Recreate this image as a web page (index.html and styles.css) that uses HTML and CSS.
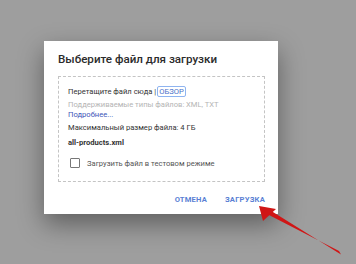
FILE: index.html
```html
<!DOCTYPE html>
<html lang="ru">
<head>
    <meta charset="UTF-8">
    <meta name="viewport" content="width=device-width, initial-scale=1.0">
    <title>Загрузка файла</title>
    <link rel="stylesheet" href="styles.css">
</head>
<body>
    <div class="dialog">
        <h2 class="dialog-title">Выберите файл для загрузки</h2>

        <div class="drop-box">
            <p class="drop-line">Перетащите файл сюда | <span class="browse">ОБЗОР</span></p>
            <p class="hint">Поддерживаемые типы файлов: XML, TXT</p>
            <a class="more" href="#">Подробнее...</a>
            <p class="max-size">Максимальный размер файла: 4 ГБ</p>
            <p class="file-name">all-products.xml</p>
            <label class="test-mode">
                <span class="checkbox"></span>
                Загрузить файл в тестовом режиме
            </label>
        </div>

        <div class="actions">
            <button class="btn">ОТМЕНА</button>
            <button class="btn">ЗАГРУЗКА</button>
        </div>
    </div>

    <svg class="arrow" width="356" height="264" viewBox="0 0 356 264">
        <polygon points="339,251 268,214.5 270.5,210.5 341,254.5" fill="#d01616"/>
        <polygon points="259,206 276,209 263,221" fill="#d01616"/>
    </svg>
</body>
</html>
```

FILE: styles.css
```css
* {
    margin: 0;
    padding: 0;
    box-sizing: border-box;
}

body {
    font-family: Roboto, 'Noto Sans', sans-serif;
    background-color: #9e9e9e;
    width: 356px;
    height: 264px;
    overflow: hidden;
    position: relative;
    padding: 41px 0 0 44px;
}

.dialog {
    background: white;
    width: 234px;
    height: 173px;
    padding: 11px 13px 0 14px;
    box-shadow: 0 10px 24px rgba(0, 0, 0, 0.4);
}

.dialog-title {
    font-size: 11.6px;
    font-weight: 500;
    color: #2b2b2b;
    line-height: 14px;
    margin-bottom: 10px;
}

.drop-box {
    border: 1px dashed #c4c4c4;
    height: 106px;
    padding: 9px 9px 0 9px;
    font-size: 7.6px;
    color: #333;
}

.drop-line {
    line-height: 11px;
    display: flex;
    align-items: center;
}

.browse {
    color: #4a72c9;
    border: 1.5px solid #8fb4f0;
    border-radius: 2px;
    padding: 0 1px;
    margin-left: 1px;
    line-height: 9px;
}

.hint {
    color: #b4b4b4;
    margin-top: 3px;
    line-height: 10px;
}

.more {
    display: block;
    color: #4056b8;
    text-decoration: none;
    line-height: 10px;
}

.max-size {
    margin-top: 3px;
    line-height: 10px;
}

.file-name {
    font-weight: 700;
    margin-top: 5px;
    line-height: 10px;
}

.test-mode {
    display: flex;
    align-items: center;
    gap: 7px;
    margin-top: 10px;
    margin-left: 2px;
    color: #555;
}

.checkbox {
    width: 10px;
    height: 10px;
    border: 1.5px solid #777;
    border-radius: 1px;
}

.actions {
    display: flex;
    justify-content: flex-end;
    gap: 18px;
    margin-top: 13px;
}

.btn {
    background: none;
    border: none;
    font-family: Roboto, 'Noto Sans', sans-serif;
    font-size: 7.6px;
    font-weight: 700;
    color: #5a7fd4;
    letter-spacing: 0.2px;
    line-height: 10px;
}

.arrow {
    position: absolute;
    left: 0;
    top: 0;
}
```
